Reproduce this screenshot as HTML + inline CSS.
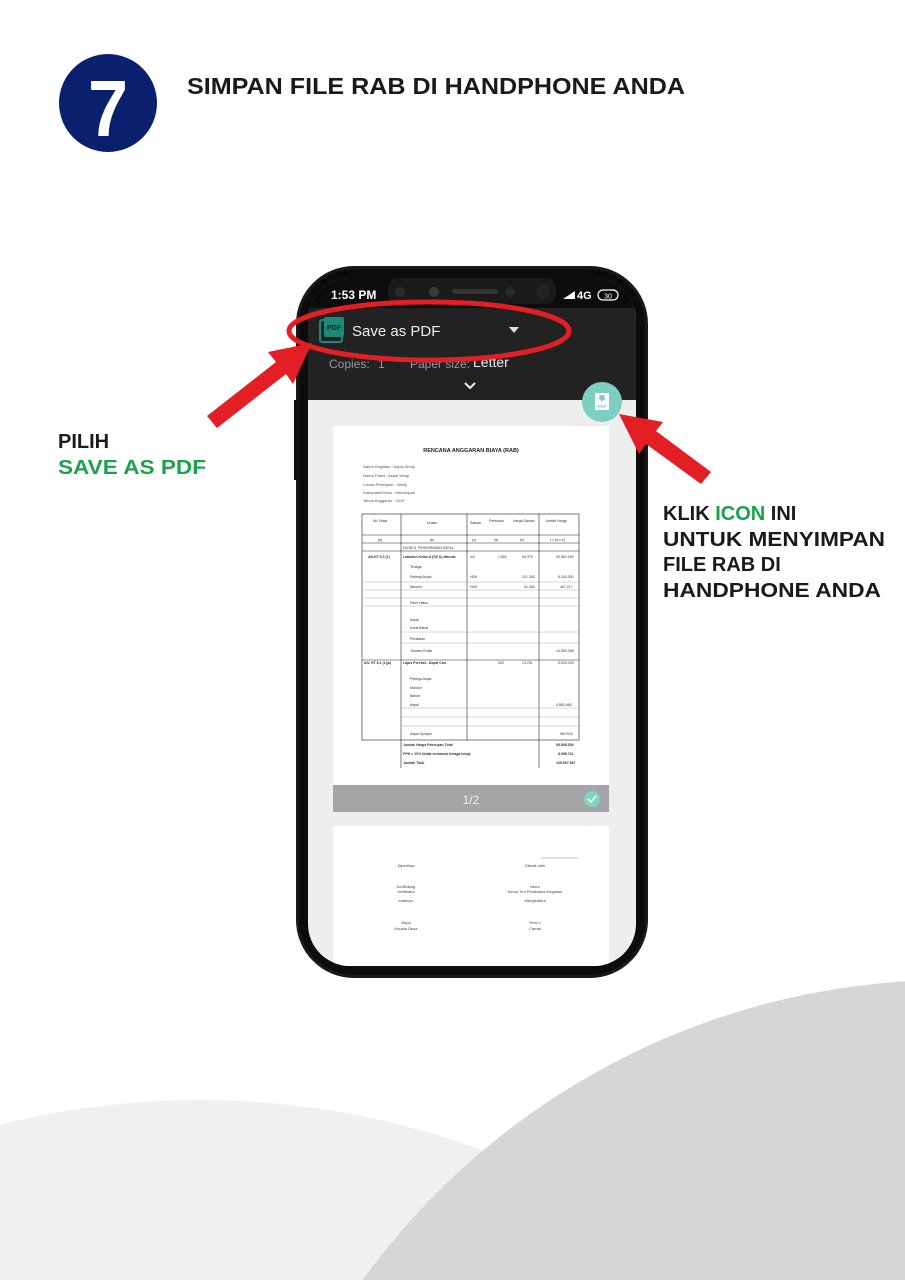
<!DOCTYPE html>
<html><head><meta charset="utf-8"><style>
html,body{margin:0;padding:0;background:#fff;width:905px;height:1280px;overflow:hidden;}
svg{display:block;font-family:"Liberation Sans",sans-serif;}
</style></head><body>
<svg width="905" height="1280" viewBox="0 0 905 1280" xmlns="http://www.w3.org/2000/svg">
<circle cx="200" cy="1920" r="820" fill="#f0f0f0"/>
<circle cx="950" cy="1705" r="725" fill="#d6d6d6"/>

<circle cx="108" cy="103" r="49" fill="#0a1f6e"/>
<text x="108" y="136" text-anchor="middle" font-size="80" font-weight="bold" fill="#fff" textLength="40" lengthAdjust="spacingAndGlyphs">7</text>
<text x="187" y="94" font-size="23" font-weight="bold" fill="#1a1a1a" textLength="498" lengthAdjust="spacingAndGlyphs">SIMPAN FILE RAB DI HANDPHONE ANDA</text>

<text x="58" y="448" font-size="20" font-weight="bold" fill="#1a1a1a">PILIH</text>
<text x="58" y="474" font-size="20" font-weight="bold" fill="#1aa34a" textLength="148" lengthAdjust="spacingAndGlyphs">SAVE AS PDF</text>
<g font-size="20" font-weight="bold" fill="#1a1a1a">
<text x="663" y="520">KLIK <tspan fill="#1aa34a">ICON</tspan> INI</text>
<text x="663" y="546" textLength="222" lengthAdjust="spacingAndGlyphs">UNTUK MENYIMPAN</text>
<text x="663" y="571">FILE RAB DI</text>
<text x="663" y="597" textLength="218" lengthAdjust="spacingAndGlyphs">HANDPHONE ANDA</text>
</g>

<rect x="296" y="266" width="352" height="712" rx="58" fill="#1a1a1a"/>
<rect x="299" y="269" width="346" height="706" rx="55" fill="#0c0c0c"/>
<rect x="294" y="400" width="4" height="80" fill="#111"/>
<clipPath id="scr"><rect x="308" y="278" width="328" height="688" rx="42"/></clipPath>
<g clip-path="url(#scr)">
<rect x="308" y="278" width="328" height="688" fill="#eeeeee"/>
<rect x="308" y="278" width="328" height="122" fill="#222222"/>
<rect x="308" y="278" width="328" height="30" fill="#0c0c0c"/>
</g>
<rect x="388" y="278" width="168" height="26" rx="10" fill="#1a1a1a"/>
<circle cx="400" cy="292" r="5" fill="#2a2a2a"/>
<circle cx="434" cy="292" r="5" fill="#3a3a3a"/>
<rect x="452" y="289" width="46" height="5" rx="2.5" fill="#333"/>
<circle cx="510" cy="292" r="5" fill="#2a2a2a"/>
<circle cx="543" cy="292" r="7" fill="#222"/>
<text x="331" y="299" font-size="12" font-weight="bold" fill="#fff">1:53 PM</text>
<path d="M563 299 L575 291 L575 299 Z" fill="#fff"/>
<text x="577" y="299" font-size="11" font-weight="bold" fill="#fff">4G</text>
<rect x="598" y="290" width="20" height="10" rx="5" fill="none" stroke="#fff" stroke-width="1.2"/>
<text x="608" y="298.5" font-size="7" fill="#fff" text-anchor="middle">30</text>

<rect x="320" y="320" width="22" height="22" rx="2" fill="none" stroke="#1c8a76" stroke-width="2"/>
<rect x="324" y="317" width="20" height="20" rx="2" fill="#1c8a76"/>
<text x="334" y="330" font-size="7" font-weight="bold" fill="#222" text-anchor="middle">PDF</text>
<text x="352" y="336" font-size="15" fill="#eee">Save as PDF</text>
<path d="M509 327 L519 327 L514 333 Z" fill="#ddd"/>
<text x="329" y="368" font-size="12" fill="#999">Copies:</text>
<text x="378" y="368" font-size="12" fill="#999">1</text>
<text x="410" y="368" font-size="12" fill="#999">Paper size:</text>
<text x="473" y="367" font-size="14" fill="#eee">Letter</text>
<path d="M465 383 L470 388 L475 383" fill="none" stroke="#eee" stroke-width="2"/>

<rect x="333" y="426" width="276" height="386" fill="#fff"/>
<rect x="333" y="785" width="276" height="27" fill="#a5a5a5"/>
<text x="471" y="804" font-size="12" fill="#eee" text-anchor="middle">1/2</text>
<circle cx="592" cy="799" r="8" fill="#7ed3c5"/>
<path d="M588 799 L591 802 L596 796" fill="none" stroke="#fff" stroke-width="1.6"/>
<text x="471" y="452" font-size="5.5" font-weight="bold" fill="#222" text-anchor="middle">RENCANA ANGGARAN BIAYA (RAB)</text>
<g font-size="4" fill="#555">
<text x="363" y="468">Nama Kegiatan    :  Aspal Wonji</text>
<text x="363" y="477">Nama Paket        :  Aspal Wonji</text>
<text x="363" y="486">Lokasi Pekerjaan :  Wonji</text>
<text x="363" y="494">Kabupaten/Kota   :  Hendropati</text>
<text x="363" y="502">Tahun Anggaran    :  2019</text>
</g>
<g stroke="#222" stroke-width="0.6" fill="none">
<rect x="362" y="514" width="217" height="226"/>
<line x1="362" y1="535" x2="579" y2="535"/>
<line x1="362" y1="543" x2="579" y2="543"/>
<line x1="362" y1="551" x2="579" y2="551"/>
<line x1="362" y1="660" x2="579" y2="660"/>
<line x1="401" y1="514" x2="401" y2="768"/>
<line x1="467" y1="514" x2="467" y2="740"/>
<line x1="539" y1="514" x2="539" y2="768"/>
</g>
<g stroke="#999" stroke-width="0.4">
<line x1="362" y1="582" x2="579" y2="582"/><line x1="362" y1="590" x2="579" y2="590"/>
<line x1="362" y1="598" x2="579" y2="598"/><line x1="362" y1="606" x2="579" y2="606"/>
<line x1="401" y1="632" x2="579" y2="632"/><line x1="401" y1="643" x2="579" y2="643"/>
<line x1="401" y1="708" x2="579" y2="708"/><line x1="401" y1="717" x2="579" y2="717"/>
<line x1="401" y1="726" x2="579" y2="726"/>
</g>
<g font-size="3.5" fill="#333">
<text x="373" y="522">No. Mata</text><text x="427" y="524">Uraian</text><text x="470" y="524">Satuan</text><text x="489" y="522">Perkiraan</text><text x="513" y="522">Harga Satuan</text><text x="545" y="522">Jumlah Harga</text>
<text x="378" y="541">(a)</text><text x="430" y="541">(b)</text><text x="472" y="541">(c)</text><text x="494" y="541">(d)</text><text x="520" y="541">(e)</text><text x="550" y="541">f = (d x e)</text>
<text x="403" y="549">DIVISI 6. PERKERASAN ASPAL</text>
<text x="368" y="558" font-weight="bold">AN.HT 6.3 (1)</text><text x="403" y="558" font-weight="bold">Lataston Kelas A (SS A) Manual</text><text x="470" y="558">m2</text><text x="498" y="558">1.500</text><text x="522" y="558">60.375</text><text x="556" y="558">90.563.160</text>
<text x="410" y="568">Tenaga</text><text x="410" y="578">Pekerja Aspal</text><text x="470" y="578">HOK</text><text x="522" y="578">121.383</text><text x="558" y="578">5.240.030</text>
<text x="410" y="588">Mandor</text><text x="470" y="588">HOK</text><text x="524" y="588">51.383</text><text x="560" y="588">407.217</text>
<text x="410" y="604">Pasir Halus</text><text x="410" y="621">Aspal</text><text x="410" y="629">Koral Bakar</text><text x="410" y="640">Peralatan</text>
<text x="410" y="652">Tandem Roller</text><text x="556" y="652">10.550.348</text>
<text x="364" y="664" font-weight="bold">AN. HT 6.1 (1)(a)</text><text x="403" y="664" font-weight="bold">Lapis Perekat - Aspal Cair</text><text x="498" y="664">400</text><text x="522" y="664">13.231</text><text x="558" y="664">5.924.039</text>
<text x="410" y="680">Pekerja Aspal</text><text x="410" y="689">Mandor</text><text x="410" y="697">Bahan</text><text x="410" y="706">Aspal</text><text x="556" y="706">4.583.466</text>
<text x="410" y="735">Aspal Sprayer</text><text x="560" y="735">964.520</text>
<text x="403" y="746" font-weight="bold">Jumlah Harga Pekerjaan Total</text><text x="556" y="746" font-weight="bold">95.898.536</text>
<text x="403" y="755" font-weight="bold">PPN = 10% (tidak termasuk tenaga kerja)</text><text x="558" y="755" font-weight="bold">8.998.741</text>
<text x="403" y="764" font-weight="bold">Jumlah Total</text><text x="556" y="764" font-weight="bold">105.897.567</text>
</g>

<rect x="333" y="826" width="276" height="150" fill="#fff" clip-path="url(#scr)"/>
<line x1="541" y1="858" x2="578" y2="858" stroke="#888" stroke-width="0.5"/>
<g font-size="4" fill="#444" text-anchor="middle">
<text x="406" y="867">Diperiksa</text><text x="535" y="867">Dibuat oleh</text>
<text x="406" y="888">Ka.Bidang</text><text x="535" y="888">Islam</text>
<text x="406" y="893">Verifikator</text><text x="535" y="893">Ketua Tim Pelaksana Kegiatan</text>
<text x="406" y="902">Imamya,</text><text x="535" y="902">Mengetahui</text>
<text x="406" y="924">Bupa</text><text x="535" y="924">Resi u</text>
<text x="406" y="930">Kepala Desa</text><text x="535" y="930">Camat</text>
</g>

<circle cx="602" cy="402" r="20" fill="#7ecfc2"/>
<rect x="595" y="393" width="14" height="17" rx="1" fill="#fff"/>
<path d="M599.5 395 L604.5 395 L604.5 398 L606 398 L602 401.5 L598 398 L599.5 398 Z" fill="#7ecfc2"/>
<text x="602" y="408" font-size="4.5" font-weight="bold" fill="#7ecfc2" text-anchor="middle">PDF</text>

<ellipse cx="429" cy="331" rx="140" ry="29" fill="none" stroke="#e31e24" stroke-width="5"/>
<path d="M217 428 L286 374 L293 384 L312 343 L268 352 L276 362 L207 416 Z" fill="#e31e24"/>
<path d="M701 484 L646 444 L639 454 L619 414 L663 422 L656 431 L711 472 Z" fill="#e31e24"/>
</svg>
</body></html>
